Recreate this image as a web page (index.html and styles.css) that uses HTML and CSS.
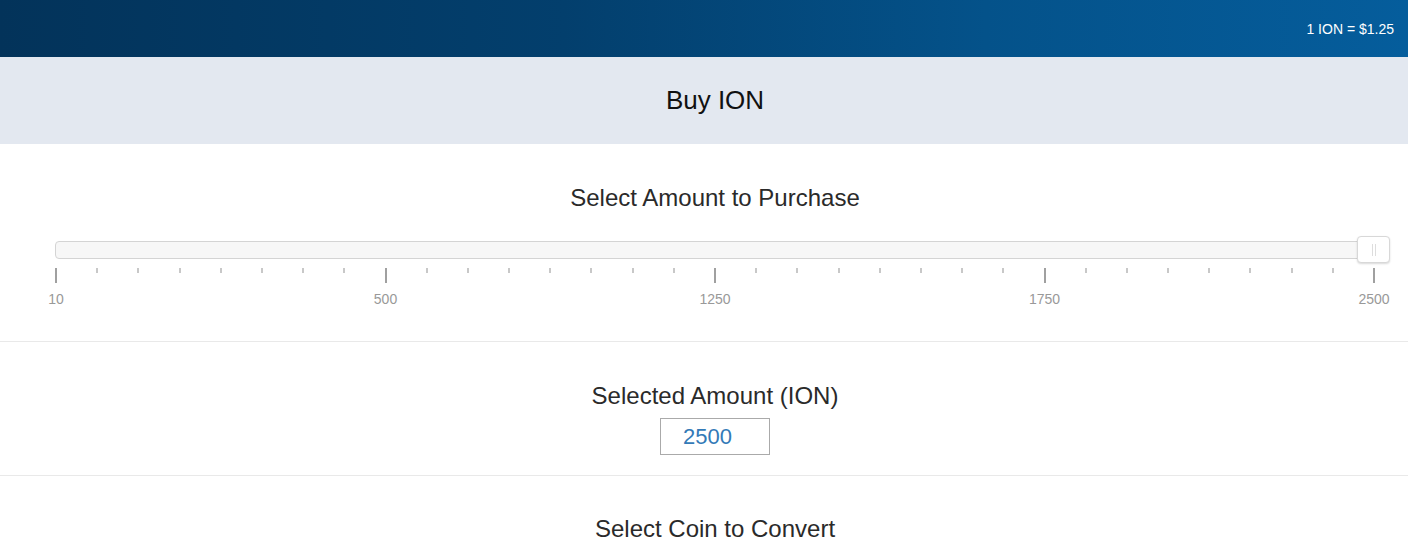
FILE: index.html
```html
<!DOCTYPE html>
<html>
<head>
<meta charset="utf-8">
<link rel="stylesheet" href="styles.css">
</head>
<body>
<header class="topbar">
  <span class="rate">1 ION = $1.25</span>
</header>
<main class="page">
  <div class="titleband"><h1>Buy ION</h1></div>
  <section class="block slider-block">
    <h2>Select Amount to Purchase</h2>
    <div class="slider">
      <div class="track"><div class="thumb"><span class="grip"></span></div></div>
      <div class="ticks" id="ticks"></div>
      <div class="labels">
        <span>10</span><span>500</span><span>1250</span><span>1750</span><span>2500</span>
      </div>
    </div>
  </section>
  <section class="block amount-block">
    <h2>Selected Amount (ION)</h2>
    <div class="amount">2500</div>
  </section>
  <section class="block coin-block">
    <h2>Select Coin to Convert</h2>
  </section>
</main>
<script>
  var t = document.getElementById('ticks');
  for (var i = 0; i <= 32; i++) {
    var s = document.createElement('span');
    s.className = (i % 8 === 0) ? 'tick major' : 'tick';
    t.appendChild(s);
  }
</script>
</body>
</html>
```
FILE: styles.css
```css
* { box-sizing: border-box; }
html { overflow: hidden; }
html, body { margin: 0; padding: 0; }
body {
  font-family: "Liberation Sans", Arial, sans-serif;
  color: #333;
  background: #fff;
}
.topbar {
  height: 57px;
  background: linear-gradient(to right, #03335a 0%, #033f6d 40%, #04528a 70%, #055d9c 100%);
  display: flex;
  align-items: center;
  justify-content: flex-end;
  padding-right: 14px;
}
.rate {
  color: #fff;
  font-size: 14px;
}
.page {
  width: 1430px;
}
.titleband {
  height: 87px;
  background: #e3e8f0;
  display: flex;
  align-items: center;
  justify-content: center;
}
.titleband h1 {
  margin: 0;
  font-weight: normal;
  font-size: 26px;
  color: #111;
}
.block {
  text-align: center;
}
.block h2 {
  margin: 0;
  font-weight: normal;
  font-size: 24px;
  color: #2a2a2a;
}
.slider-block {
  padding-top: 40px;
  height: 198px;
  border-bottom: 1px solid #e9e9e9;
}
.slider {
  margin: 29px 40px 0 55px;
  position: relative;
}
.track {
  height: 18px;
  border: 1px solid #d4d4d4;
  border-radius: 4px;
  background: #f7f7f7;
  position: relative;
}
.thumb {
  position: absolute;
  right: -1px;
  top: -6px;
  width: 33px;
  height: 27px;
  background: #fff;
  border: 1px solid #d8d8d8;
  border-radius: 4px;
  box-shadow: 0 1px 2px rgba(0,0,0,0.15);
  display: flex;
  align-items: center;
  justify-content: center;
}
.grip {
  width: 4px;
  height: 12px;
  border-left: 1px solid #ddd;
  border-right: 1px solid #ddd;
}
.ticks {
  display: flex;
  justify-content: space-between;
  align-items: flex-start;
  width: 1320px;
  margin-top: 9px;
  height: 15px;
}
.tick {
  width: 2px;
  height: 5px;
  background: #c8c8c8;
}
.tick.major {
  height: 15px;
  background: #a0a0a0;
}
.labels {
  display: flex;
  justify-content: space-between;
  width: 1318px;
  margin-left: 1px;
  margin-top: 8px;
  font-size: 14px;
  color: #999;
}
.labels span { width: 0; display: flex; justify-content: center; white-space: nowrap; }
.amount-block {
  padding-top: 40px;
  height: 134px;
  border-bottom: 1px solid #e9e9e9;
}
.amount {
  width: 110px;
  height: 37px;
  margin: 8px auto 0;
  border: 1px solid #aaa;
  color: #337ab7;
  font-size: 22px;
  line-height: 35px;
  text-align: left;
  padding-left: 22px;
}
.coin-block {
  padding-top: 39px;
}
```
